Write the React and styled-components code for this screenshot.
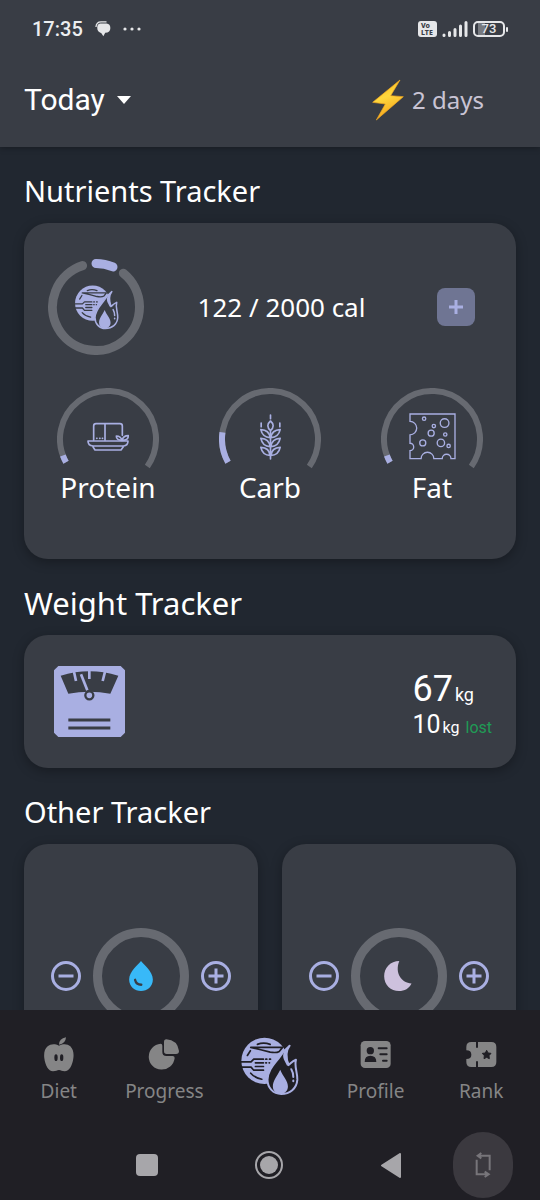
import React, { useState } from 'react';
import styled, { createGlobalStyle, ThemeProvider } from 'styled-components';

const theme = {
  page: '#212730',
  panel: '#393d45',
  bar: '#201f25',
  track: '#676a71',
  lavender: '#a9afe2',
  muted: '#858586',
}

const GlobalStyle = createGlobalStyle`
  * {
    box-sizing: border-box;
  }
  body {
    margin: 0;
    background-color: #212730;
    font-family: 'Noto Sans', sans-serif;
    color: #ffffff;
  }
  button {
    padding: 0;
    border: 0;
    background: none;
    font: inherit;
    color: inherit;
    cursor: pointer;
  }
  svg {
    display: block;
  }
`

const Screen = styled.div`
  height: 100vh;
  display: flex;
  flex-direction: column;
  overflow: hidden;
`

const Header = styled.header`
  flex: none;
  background-color: ${props => props.theme.panel};
  box-shadow: 0 1px 6px rgba(0,0,0,0.3);
  z-index: 1;
`

const StatusBar = styled.div`
  display: flex;
  align-items: center;
  justify-content: space-between;
  height: 58px;
  padding: 0 32px;
`

const StatusGroup = styled.div`
  display: flex;
  align-items: center;
  gap: ${props => props.$gap};
`

const Clock = styled.span`
  font-family: Roboto, sans-serif;
  font-size: 20px;
  font-weight: 500;
  color: #eceef0;
`

const Volte = styled.span`
  width: 19px;
  height: 16px;
  border-radius: 3px;
  background-color: #e6e7e9;
  color: #393d45;
  font-size: 7px;
  line-height: 7px;
  font-weight: 800;
  padding: 1px 3px;
`

const Battery = styled.span`
  display: flex;
  align-items: center;
  &::after {
    content: '';
    width: 2px;
    height: 5px;
    margin-left: 1px;
    border-radius: 1px;
    background-color: #e6e7e9;
  }
`

const BatteryBody = styled.span`
  width: 32px;
  height: 16px;
  border: 2px solid #e6e7e9;
  border-radius: 5px;
  text-align: center;
  font-family: Roboto, sans-serif;
  font-size: 13px;
  line-height: 12px;
  font-weight: 500;
  color: #e6e7e9;
  background: linear-gradient(90deg, #393d45 3px, #777a80 3px, #777a80 10px, #393d45 10px);
`

const TitleBar = styled.div`
  display: flex;
  align-items: center;
  justify-content: space-between;
  height: 89px;
  padding: 0 56px 6px 24px;
`

const DayPicker = styled.label`
  display: flex;
  align-items: center;
  gap: 12px;
`

const DaySelect = styled.select`
  appearance: none;
  border: 0;
  padding: 0;
  outline: none;
  background: none;
  color: #ffffff;
  font-family: Roboto, sans-serif;
  font-size: 30px;
  line-height: 36px;
`

const Streak = styled.div`
  display: flex;
  align-items: center;
  gap: 8px;
  font-size: 24px;
  color: #c9c4d4;
`

const Content = styled.main`
  flex: 1;
  min-height: 0;
  overflow-y: auto;
  padding: 0 24px;
  scrollbar-width: none;
`

const Section = styled.section`
  padding-top: 26px;
`

const SectionTitle = styled.h2`
  margin: 0 0 14px;
  font-size: ${props => props.$large ? '31px' : '29px'};
  line-height: 36px;
  font-weight: 400;
`

const Card = styled.div`
  border-radius: 24px;
  background-color: ${props => props.theme.panel};
  box-shadow: 0 3px 12px rgba(0,0,0,0.3);
`

const NutrientsCard = styled(Card)`
  padding: 36px 0 55px;
`

const CaloriesRow = styled.div`
  display: grid;
  grid-template-columns: 96px 1fr 38px;
  align-items: center;
  padding: 0 41px 0 24px;
`

const CaloriesText = styled.p`
  margin: 0;
  padding-right: 18px;
  text-align: center;
  font-size: 26px;
`

const AddButton = styled.button`
  display: grid;
  place-items: center;
  width: 38px;
  height: 38px;
  border-radius: 8px;
  background-color: #6f7593;
`

const GaugeRow = styled.div`
  display: grid;
  grid-template-columns: repeat(3, 1fr);
  padding: 33px 3px 0;
`

const GaugeBox = styled.div`
  display: flex;
  flex-direction: column;
  align-items: center;
  font-size: 28px;
  line-height: 34px;
`

const WeightCard = styled(Card)`
  display: flex;
  align-items: center;
  justify-content: space-between;
  padding: 27px 24px 27px 30px;
`

const WeightInfo = styled.div`
  padding-top: 7px;
  font-family: Roboto, sans-serif;
`

const WeightLine = styled.p`
  display: flex;
  align-items: baseline;
  gap: 2px;
  margin: 0;
  font-size: ${props => props.$main ? '36px' : '25px'};
  line-height: ${props => props.$main ? '40px' : '32px'};
`

const Unit = styled.span`
  font-size: ${props => props.$main ? '18px' : '16px'};
  line-height: 20px;
`

const Lost = styled.span`
  margin-left: 4px;
  font-size: 16px;
  line-height: 20px;
  color: #209b55;
`

const TrackerGrid = styled.div`
  display: grid;
  grid-template-columns: 1fr 1fr;
  gap: 24px;
  padding-bottom: 24px;
`

const TrackerCard = styled(Card)`
  display: flex;
  align-items: center;
  justify-content: center;
  gap: 12px;
  padding: 84px 0;
`

const BottomNav = styled.nav`
  flex: none;
  display: grid;
  grid-template-columns: repeat(5, 1fr);
  height: 120px;
  padding: 27px 6px 0;
  background-color: ${props => props.theme.bar};
  z-index: 1;
`

const NavLink = styled.a`
  display: flex;
  flex-direction: column;
  align-items: center;
  gap: 6px;
  font-size: 19px;
  line-height: 26px;
  color: ${props => props.theme.muted};
  text-decoration: none;
`

const SystemNav = styled.div`
  flex: none;
  display: grid;
  grid-template-columns: 2fr 2fr 2fr 1fr;
  align-items: center;
  justify-items: center;
  height: 70px;
  padding: 0 5% 0 16%;
  background-color: ${props => props.theme.bar};
`

const RotateButton = styled.button`
  display: grid;
  place-items: center;
  width: 60px;
  height: 66px;
  border-radius: 30px;
  background-color: #3b393f;
`

const point = (cx, cy, r, deg) => {
  const rad = (deg * Math.PI) / 180
  return `${cx + r * Math.cos(rad)} ${cy + r * Math.sin(rad)}`
}

// angles in degrees, clockwise from three o'clock
const arc = (cx, cy, r, from, to) =>
  `M${point(cx, cy, r, from)} A${r} ${r} 0 ${to - from > 180 ? 1 : 0} 1 ${point(cx, cy, r, to)}`

const Logo = ({ bg, ...rest }) => (
  <svg viewBox="60 82 176 176" {...rest}>
    <circle cx="133" cy="153" r="69" fill={theme.lavender} />
    <g fill="none" stroke={bg} strokeWidth="5" strokeLinecap="round" strokeLinejoin="round">
      <path d="M112 104 Q130 97 150 104" />
      <path d="M92 113 H187 L177 125 Q169 130 150 127 L122 120 Z" />
      <path d="M82 137 L91 123" />
      <path d="M130 148 H101 L93 156 H64 M64 172 H93 L101 181 H130" />
      <path d="M106 159 H130 M106 170 H130" />
      <path d="M137 148 H140 M148 148 H151 M137 159 H139 M147 159 H148" />
      <path d="M92 190 Q104 204 125 208" />
    </g>
    <path
      d="M208 108 C194 126 197 145 204 166 C211 162 214 155 227 150 C221 170 232 187 231 210 C229 236 209 252 183 252 C159 252 142 234 142 209 C144 176 166 160 180 139 C188 126 196 118 208 108 Z"
      fill={bg} stroke={theme.lavender} strokeWidth="6" strokeLinejoin="round"
    />
    <path fill={theme.lavender} d="M208 108 C191 120 185 134 191 149 L200 167 L207 162 C198 142 195 128 208 108 Z" />
    <path fill={theme.lavender} d="M180 180 C171 199 158 212 158 230 C158 244 170 252 181 252 C193 252 203 243 203 230 C203 212 187 199 180 180 Z" />
    <path fill="none" stroke={theme.lavender} strokeWidth="6" strokeLinecap="round" d="M213 178 Q219 188 219 201 M219 212 V214" />
  </svg>
)

const TofuIcon = props => (
  <svg viewBox="141 153 126 88" fill="none" stroke={theme.lavender} strokeWidth="5" strokeLinejoin="round" strokeLinecap="round" {...props}>
    <path d="M161 207 V164 Q161 157 168 157 H240 Q247 157 247 164 V192 M195 157 V207" />
    <path d="M144 209 H264 Q264 223 250 224 H159 Q144 223 144 209 Z M158 225 L165 236 H243 L251 225" />
    <path d="M246 207 Q229 207 229 194 Q242 194 246 207 Q250 193 265 193 Q265 207 246 207 Z" />
    <path d="M170 201 H171 M179 201 H180 M187 201 H188" />
  </svg>
)

const WheatSide = () => (
  <g>
    <path d="M691 199 Q668 198 663 175 Q688 176 691 199 Z" />
    <path d="M691 226 Q668 225 663 201 Q688 202 691 226 Z" />
    <path d="M691 252 Q668 252 663 228 Q688 229 691 252 Z" />
    <path d="M664 155 V166" />
  </g>
)

const WheatIcon = props => (
  <svg viewBox="658 128 68 138" fill="none" stroke={theme.lavender} strokeWidth="5" strokeLinejoin="round" strokeLinecap="round" {...props}>
    <WheatSide />
    <g transform="translate(1384 0) scale(-1 1)"><WheatSide /></g>
    <path d="M692 149 Q676 163 692 178 Q708 163 692 149 Z M692 131 V142 M692 180 V263" />
  </svg>
)

const CheeseIcon = props => (
  <svg viewBox="386 127 140 140" fill="none" stroke={theme.lavender} strokeWidth="4" {...props}>
    <path d="M389 130 H523 V263 H511 A13 13 0 0 0 485 263 H460 A19 19 0 0 0 422 263 H389 V239 A11 11 0 0 0 389 217 V192 A20 20 0 0 0 389 152 Z" />
    <circle cx="492" cy="157" r="13" />
    <circle cx="452" cy="187" r="9" />
    <circle cx="427" cy="216" r="9" />
    <circle cx="481" cy="216" r="11" />
    <circle cx="431" cy="144" r="5" />
    <circle cx="460" cy="166" r="5" />
    <circle cx="494" cy="191" r="5" />
    <circle cx="504" cy="225" r="5" />
  </svg>
)

const Gauge = ({ label, end, children }) => (
  <GaugeBox>
    <svg width="102" height="82" viewBox="0 0 102 82" fill="none" strokeWidth="6">
      <path d={arc(51, 51, 48, 151, 395)} stroke={theme.track} />
      <path d={arc(51, 51, 48, 151, end)} stroke={theme.lavender} />
      {children}
    </svg>
    {label}
  </GaugeBox>
)

const CalorieRing = () => (
  <svg width="96" height="96" viewBox="0 0 96 96" fill="none" strokeWidth="9" strokeLinecap="round">
    <path d={arc(48, 48, 43.5, -51, 252)} stroke={theme.track} />
    <path d={arc(48, 48, 43.5, -90, -67)} stroke={theme.lavender} />
    <Logo bg={theme.panel} x="26" y="26" width="45" height="45" strokeWidth="0" />
  </svg>
)

const ScaleIcon = () => (
  <svg width="71" height="71" viewBox="104 109 213 213">
    <path fill={theme.lavender} d="M117 109 H304 L317 122 V309 L304 322 H117 L104 309 V122 Z" />
    <path fill={theme.panel} d="M124 138 Q210 112 297 138 L273 192 Q210 180 147 192 Z" />
    <g stroke={theme.lavender} fill="none">
      <path strokeWidth="8" d="M163 122 L170 154 M210 118 V148 M258 122 L250 154" />
      <path strokeWidth="8" d="M185 134 L204 182" />
    </g>
    <circle cx="210" cy="197" r="12" fill={theme.lavender} stroke={theme.panel} strokeWidth="7" />
    <path stroke={theme.panel} strokeWidth="9" d="M147 271 H273 M147 295 H273" />
  </svg>
)

const RoundButton = ({ plus, label, onClick }) => (
  <button aria-label={label} onClick={onClick}>
    <svg width="30" height="30" viewBox="0 0 30 30" fill="none" stroke={theme.lavender} strokeWidth="3">
      <circle cx="15" cy="15" r="13.5" />
      <path d={plus ? 'M7.5 15 H22.5 M15 7.5 V22.5' : 'M7.5 15 H22.5'} />
    </svg>
  </button>
)

const Tracker = ({ name, children }) => {

  const [ count, setCount ] = useState(0);

  const share = Math.min(count, 8) / 8

  return (
    <TrackerCard>
      <RoundButton label={`Less ${name}`} onClick={() => setCount(Math.max(0, count - 1))} />
      <svg width="96" height="96" viewBox="0 0 96 96" fill="none">
        <circle cx="48" cy="48" r="43.5" stroke={theme.track} strokeWidth="9" />
        {share > 0 && <path d={arc(48, 48, 43.5, -90, -90 + share * 359)} stroke={theme.lavender} strokeWidth="9" />}
        {children}
      </svg>
      <RoundButton plus label={`More ${name}`} onClick={() => setCount(count + 1)} />
    </TrackerCard>
  )
}

const AppleIcon = () => (
  <svg width="30" height="35" viewBox="131 81 90 105">
    <path fill={theme.muted} d="M176 104 Q176 86 197 82 Q196 101 176 104 Z" />
    <path fill={theme.muted} d="M176 107 C190 100 202 102 210 109 C219 118 221 132 219 145 C216 167 207 184 193 184 C185 184 182 180 176 180 C170 180 167 184 158 184 C144 184 135 167 132 145 C130 130 133 116 142 109 C150 102 163 100 176 107 Z" />
    <ellipse cx="167" cy="143" rx="5" ry="10" fill={theme.bar} />
    <ellipse cx="184" cy="143" rx="5" ry="10" fill={theme.bar} />
  </svg>
)

const PieIcon = () => (
  <svg width="32" height="35" viewBox="443 81 96 105" fill={theme.muted}>
    <path d="M481 101 Q486 101 486 107 V126 Q486 138 498 138 H517 Q523 138 523 144 A39 39 0 1 1 481 101 Z" />
    <path d="M498 88 Q531 90 536 123 Q536 132 527 132 H499 Q491 132 491 124 V96 Q491 88 498 88 Z" />
  </svg>
)

const ProfileIcon = () => (
  <svg width="31" height="35" viewBox="118 81 93 105">
    <rect x="120" y="93" width="90" height="81" rx="13" fill={theme.muted} />
    <g fill={theme.bar}>
      <circle cx="149" cy="122" r="11" />
      <path d="M132 156 Q132 137 149 137 Q167 137 167 156 Z" />
    </g>
    <path d="M174 115 H198 M179 133 H198 M187 152 H198" stroke={theme.bar} strokeWidth="6" strokeLinecap="round" />
  </svg>
)

const TicketIcon = () => (
  <svg width="31" height="35" viewBox="436 81 93 105">
    <path fill={theme.muted} d="M452 96 H512 Q527 96 527 111 V156 Q527 171 512 171 H452 Q437 171 437 156 V147 Q452 147 452 134 Q452 121 437 121 V111 Q437 96 452 96 Z" />
    <path d="M469 94 V113 M469 154 V173" stroke={theme.bar} strokeWidth="6" />
    <path fill={theme.bar} stroke={theme.bar} strokeWidth="3" strokeLinejoin="round" d="M498 121 L502 129 L511 130 L505 137 L506 146 L498 142 L490 146 L491 137 L485 130 L494 129 Z" />
  </svg>
)

const App = () => {

  const [ calories, setCalories ] = useState(122);

  return (
  <ThemeProvider theme={theme}>
    <GlobalStyle />
    <Screen>
      <Header>
        <StatusBar>
          <StatusGroup $gap="12px">
            <Clock>17:35</Clock>
            <svg width="16" height="16" viewBox="286 65 50 50">
              <path fill="#e6e7e9" d="M302 73 H322 Q334 74 334 87 Q334 101 318 102 L312 113 L306 103 Q293 99 293 86 Q293 74 302 73 Z" />
              <path fill="none" stroke="#e6e7e9" strokeWidth="4" d="M289 84 Q290 68 305 68 H322" />
            </svg>
            <svg width="18" height="4" viewBox="0 0 18 4" fill="#e6e7e9">
              <circle cx="2" cy="2" r="1.6" />
              <circle cx="9" cy="2" r="1.6" />
              <circle cx="16" cy="2" r="1.6" />
            </svg>
          </StatusGroup>
          <StatusGroup $gap="5px">
            <Volte>Vo LTE</Volte>
            <svg width="26" height="16" viewBox="0 0 26 16" stroke="#e6e7e9" strokeWidth="3" strokeLinecap="round">
              <path d="M2 14 V14.5 M7.5 11.5 V14.5 M13 8.5 V14.5 M18.5 5 V14.5 M24 1.5 V14.5" />
            </svg>
            <Battery><BatteryBody>73</BatteryBody></Battery>
          </StatusGroup>
        </StatusBar>
        <TitleBar>
          <DayPicker>
            <DaySelect aria-label="Day"><option>Today</option></DaySelect>
            <svg width="14" height="8" viewBox="0 0 14 8"><path fill="#ffffff" d="M0 0 H14 L7 8 Z" /></svg>
          </DayPicker>
          <Streak>
            <svg width="32" height="42" viewBox="302 238 96 126">
              <defs>
                <linearGradient id="bolt" x1="0" y1="0" x2="0.3" y2="1">
                  <stop offset="0" stopColor="#f7b21c" />
                  <stop offset="0.5" stopColor="#ffd83d" />
                  <stop offset="1" stopColor="#f5a51d" />
                </linearGradient>
              </defs>
              <path fill="url(#bolt)" stroke="#f3a81f" strokeWidth="2" strokeLinejoin="round" d="M386 241 L304 308 L342 313 L315 361 L396 291 L358 288 Z" />
            </svg>
            2 days
          </Streak>
        </TitleBar>
      </Header>

      <Content>
        <Section>
          <SectionTitle>Nutrients Tracker</SectionTitle>
          <NutrientsCard>
            <CaloriesRow>
              <CalorieRing />
              <CaloriesText>{calories} / 2000 cal</CaloriesText>
              <AddButton aria-label="Add calories" onClick={() => setCalories(calories + 50)}>
                <svg width="14" height="14" viewBox="0 0 14 14" stroke="#a9afe2" strokeWidth="3">
                  <path d="M0 7 H14 M7 0 V14" />
                </svg>
              </AddButton>
            </CaloriesRow>
            <GaugeRow>
              <Gauge label="Protein" end={160}>
                <TofuIcon x="30" y="34" width="42" height="30" />
              </Gauge>
              <Gauge label="Carb" end={188}>
                <WheatIcon x="40" y="26" width="23" height="46" />
              </Gauge>
              <Gauge label="Fat" end={160}>
                <CheeseIcon x="28" y="25" width="47" height="47" />
              </Gauge>
            </GaugeRow>
          </NutrientsCard>
        </Section>

        <Section>
          <SectionTitle $large>Weight Tracker</SectionTitle>
          <WeightCard>
            <ScaleIcon />
            <WeightInfo>
              <WeightLine $main>67<Unit $main>kg</Unit></WeightLine>
              <WeightLine>10<Unit>kg</Unit><Lost>lost</Lost></WeightLine>
            </WeightInfo>
          </WeightCard>
        </Section>

        <Section>
          <SectionTitle>Other Tracker</SectionTitle>
          <TrackerGrid>
            <Tracker name="water">
              <svg x="36" y="33" width="24" height="30" viewBox="327 182 72 91">
                <path fill="#38b9f8" d="M363 182 C355 192 327 214 327 238 C327 260 344 273 363 273 C382 273 399 260 399 238 C399 214 371 192 363 182 Z" />
                <path stroke={theme.panel} strokeWidth="7" strokeLinecap="round" d="M345 239 Q348 254 364 254" />
              </svg>
            </Tracker>
            <Tracker name="sleep">
              <svg x="33" y="33" width="28" height="30" viewBox="312 182 84 91">
                <path fill="#cdc1dd" d="M358 182 C331 182 312 203 312 228 C312 254 332 273 357 273 C374 273 388 265 395 250 C365 249 343 218 358 182 Z" />
              </svg>
            </Tracker>
          </TrackerGrid>
        </Section>
      </Content>

      <BottomNav>
        <NavLink href="#diet"><AppleIcon />Diet</NavLink>
        <NavLink href="#progress"><PieIcon />Progress</NavLink>
        <NavLink href="#home" aria-label="Home"><Logo bg={theme.bar} width="59" height="59" /></NavLink>
        <NavLink href="#profile"><ProfileIcon />Profile</NavLink>
        <NavLink href="#rank"><TicketIcon />Rank</NavLink>
      </BottomNav>

      <SystemNav>
        <button aria-label="Recent apps">
          <svg width="22" height="22"><rect width="22" height="22" rx="4" fill="#a7a6aa" /></svg>
        </button>
        <button aria-label="Home screen">
          <svg width="30" height="30" viewBox="0 0 30 30">
            <circle cx="15" cy="15" r="13" fill="none" stroke="#a7a6aa" strokeWidth="2" />
            <circle cx="15" cy="15" r="9" fill="#a7a6aa" />
          </svg>
        </button>
        <button aria-label="Back">
          <svg width="20" height="25" viewBox="0 0 20 25">
            <path fill="#a7a6aa" stroke="#a7a6aa" strokeWidth="2" strokeLinejoin="round" d="M19 1 V24 L1 12.5 Z" />
          </svg>
        </button>
        <RotateButton aria-label="Rotate screen">
          <svg width="16" height="26" viewBox="465 425 48 78" fill="none" stroke="#77757a" strokeWidth="6">
            <path d="M484 428 L473 436 L484 444 M474 436 H509 V480 M494 484 L506 492 L494 500 M505 492 H470 V448" />
          </svg>
        </RotateButton>
      </SystemNav>
    </Screen>
  </ThemeProvider>
)}

export default App;
